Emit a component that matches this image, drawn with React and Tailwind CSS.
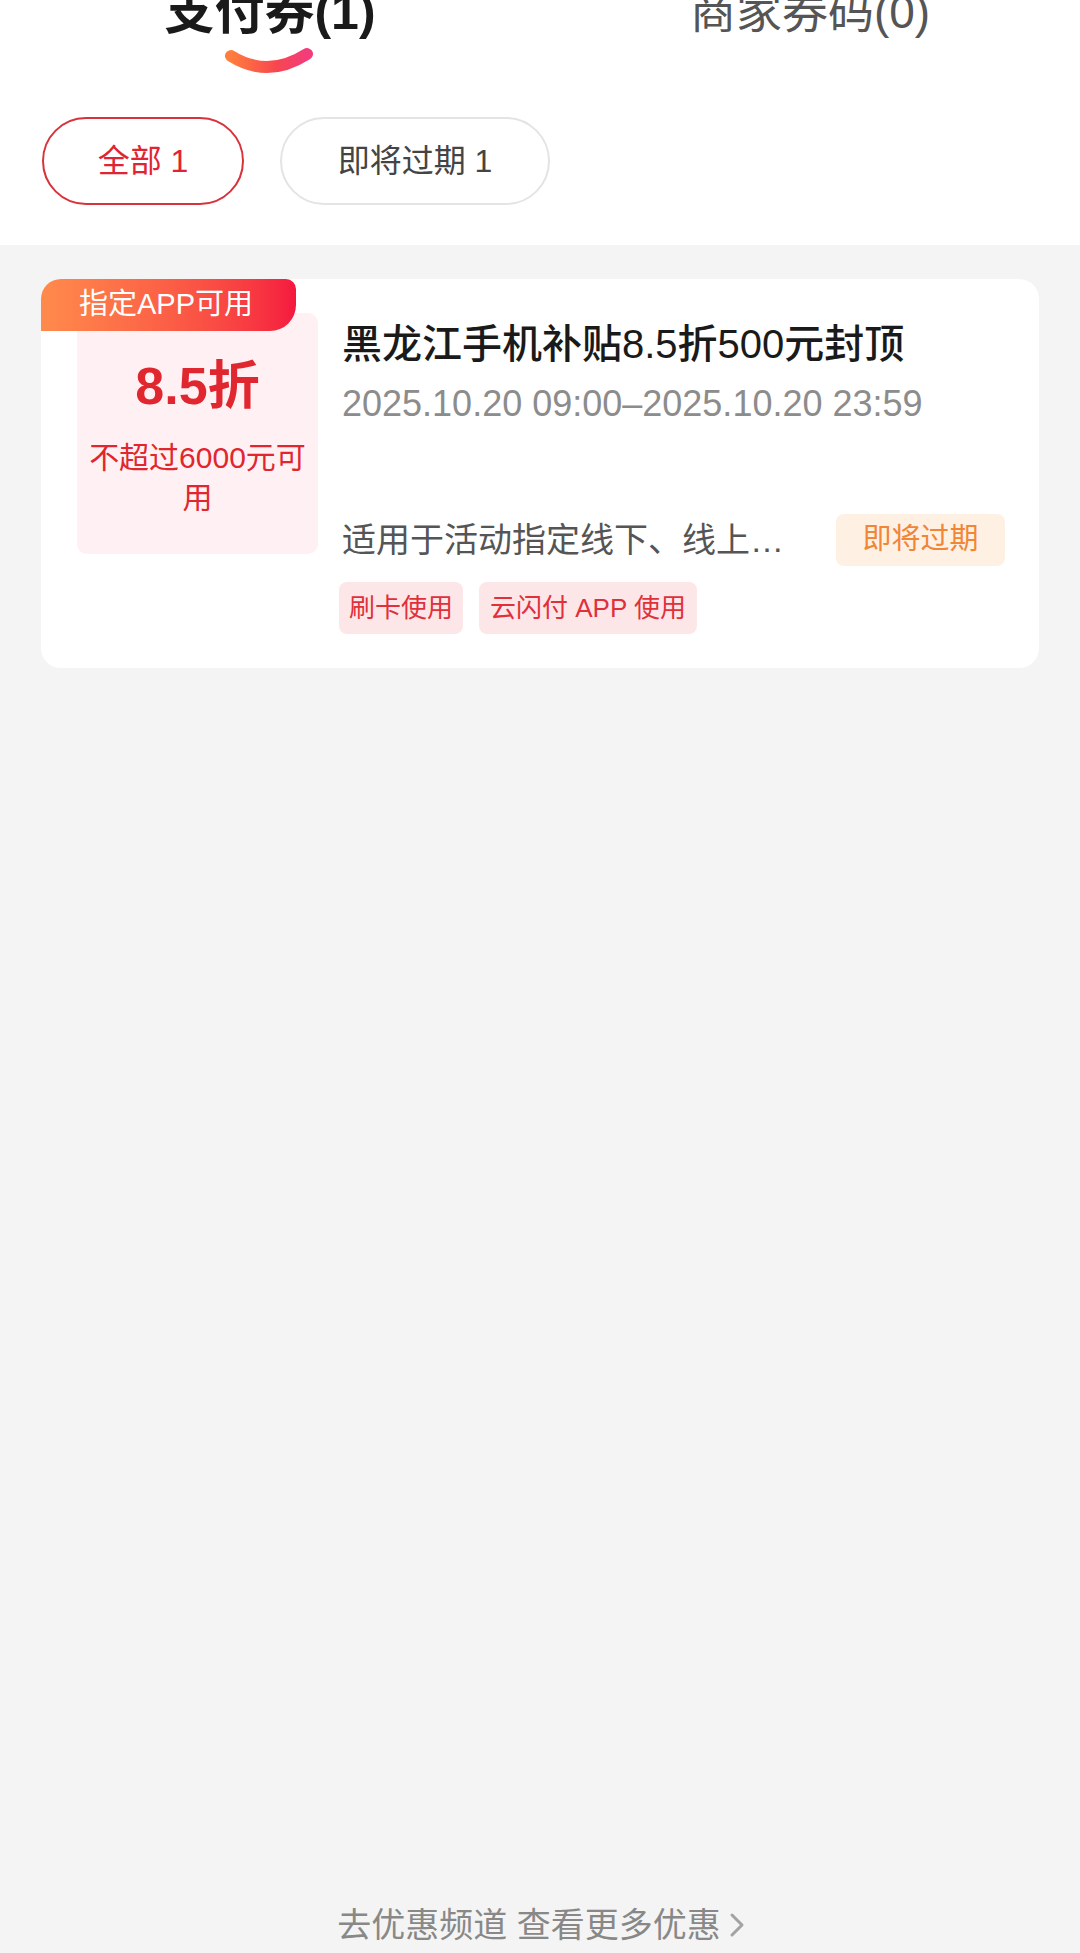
const font = { fontFamily: '"Liberation Sans", "Noto Sans CJK SC", sans-serif' };

function Swoosh() {
  return (
    <svg width="90" height="28" viewBox="0 0 90 28" fill="none">
      <defs>
        <linearGradient id="sw" x1="0" y1="0" x2="1" y2="0">
          <stop offset="0%" stopColor="#ff7d3d" />
          <stop offset="60%" stopColor="#f8464f" />
          <stop offset="100%" stopColor="#f23c7c" />
        </linearGradient>
      </defs>
      <path d="M7 9 Q44 32 83 7" stroke="url(#sw)" strokeWidth="12" strokeLinecap="round" />
    </svg>
  );
}

function Chevron() {
  return (
    <svg width="20" height="26" viewBox="0 0 20 26" fill="none">
      <path d="M5 3 L15 13 L5 23" stroke="#a3a3a3" strokeWidth="3" strokeLinecap="round" strokeLinejoin="round" />
    </svg>
  );
}

function CouponCard() {
  return (
    <div className="relative mx-[41px] mt-[34px] flex rounded-[20px] bg-white pl-[36px] pr-[34px] pt-[34px] pb-[34px]">
      <div className="absolute left-0 top-0 flex h-[52px] w-[255px] items-center rounded-tl-[20px] rounded-tr-[10px] rounded-br-[26px] bg-gradient-to-r from-[#ff8a4c] to-[#f5173f] pl-[38px] text-[29px] text-white">
        指定APP可用
      </div>
      <div className="flex h-[241px] w-[241px] shrink-0 flex-col items-center rounded-[10px] bg-[#fff1f3] pt-[43px] text-[#e0262f]">
        <div className="text-[52px] font-semibold leading-[60px]">8.5折</div>
        <div className="mt-[22px] text-center text-[30px] leading-[40px]">
          不超过6000元可
          <br />
          用
        </div>
      </div>
      <div className="ml-[24px] flex min-w-0 flex-1 flex-col">
        <div className="mt-[7px] whitespace-nowrap text-[40px] font-medium leading-[48px] text-[#1a1a1a]">
          黑龙江手机补贴8.5折500元封顶
        </div>
        <div className="mt-[14px] whitespace-nowrap text-[36px] leading-[44px] text-[#8c8c8c]">
          2025.10.20 09:00–2025.10.20 23:59
        </div>
        <div className="mt-[88px] flex h-[52px] items-center justify-between">
          <div className="whitespace-nowrap text-[34px] leading-[44px] text-[#555555]">适用于活动指定线下、线上…</div>
          <div className="flex h-[52px] w-[169px] items-center justify-center rounded-[8px] bg-[#fff0e4] text-[29px] text-[#f08636]">
            即将过期
          </div>
        </div>
        <div className="mt-[16px] ml-[-3px] flex gap-[16px]">
          <div className="flex h-[52px] items-center rounded-[8px] bg-[#fde6e8] px-[10px] text-[26px] text-[#e0313b]">刷卡使用</div>
          <div className="flex h-[52px] items-center rounded-[8px] bg-[#fde6e8] px-[11px] text-[26px] text-[#e0313b]">云闪付 APP 使用</div>
        </div>
      </div>
    </div>
  );
}

export default function App() {
  return (
    <div className="flex h-[1953px] w-[1080px] flex-col overflow-hidden bg-[#f4f4f4]" style={font}>
      <div className="h-[245px] shrink-0 bg-white">
        <div className="mt-[-18px] flex">
          <div className="flex w-[540px] flex-col items-center">
            <div className="text-[50px] font-bold leading-[60px] text-[#1a1a1a]">支付券(1)</div>
            <div className="mt-[5px] ml-[-2px]">
              <Swoosh />
            </div>
          </div>
          <div className="flex w-[540px] justify-center">
            <div className="text-[46px] leading-[60px] text-[#555555]">商家券码(0)</div>
          </div>
        </div>
        <div className="mt-[42px] flex gap-[36px] px-[42px]">
          <div className="flex h-[88px] w-[202px] items-center justify-center rounded-full border-2 border-[#d8333b] text-[32px] text-[#e02433]">
            全部 1
          </div>
          <div className="flex h-[88px] w-[270px] items-center justify-center rounded-full border-2 border-[#e4e4e4] text-[32px] text-[#444444]">
            即将过期 1
          </div>
        </div>
      </div>
      <CouponCard />
      <div className="flex-1" />
      <div className="flex items-center justify-center pb-[8px] pl-[4px]">
        <span className="text-[34px] leading-[40px] text-[#888888]">去优惠频道 查看更多优惠</span>
        <span className="ml-[6px]">
          <Chevron />
        </span>
      </div>
    </div>
  );
}
